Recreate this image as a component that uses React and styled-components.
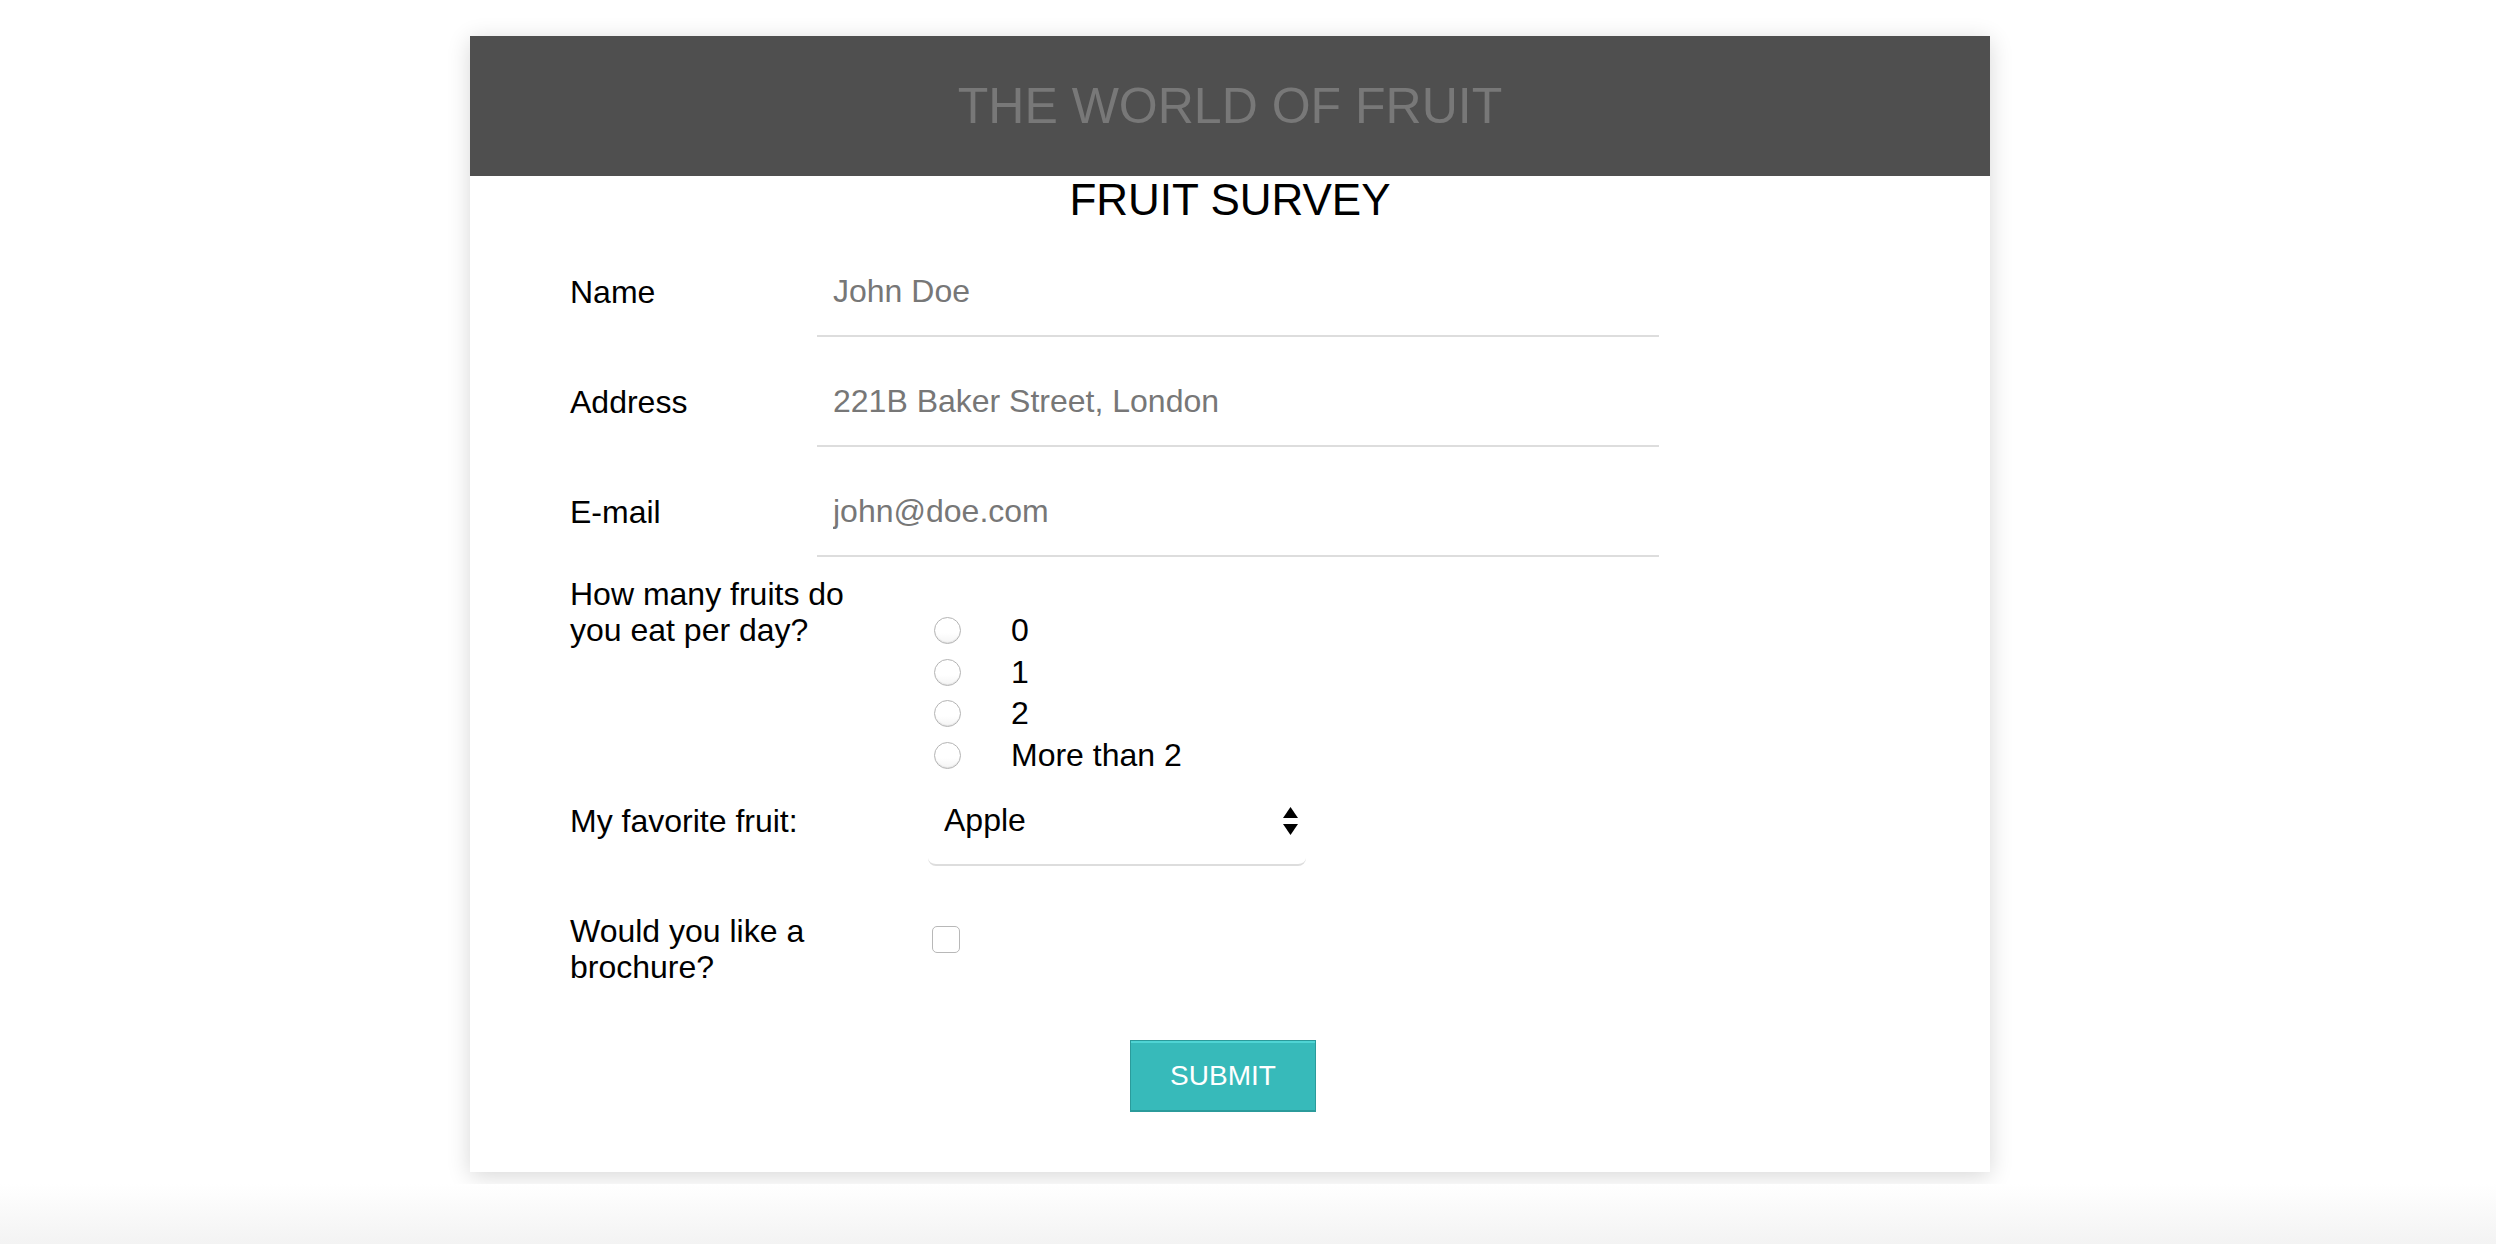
import React from 'react'
import styled, { createGlobalStyle } from 'styled-components'

const GlobalStyle = createGlobalStyle`
  html, body {
    margin: 0;
    padding: 0;
    background: #fff;
    font-family: "Liberation Sans", Arial, Helvetica, sans-serif;
    overflow: hidden;
  }
`

const Page = styled.div`
  display: flex;
  flex-direction: column;
  align-items: center;
  min-height: 100vh;
  box-sizing: border-box;
  padding-top: 36px;
`

const Card = styled.div`
  width: 1520px;
  margin-right: 36px;
  background: #fff;
  box-shadow: 0 4px 22px rgba(0, 0, 0, 0.16);
  padding-bottom: 60px;
`

const Header = styled.header`
  height: 140px;
  background: #4f4f4f;
  display: flex;
  align-items: center;
  justify-content: center;

  h1 {
    margin: 0;
    font-size: 50px;
    font-weight: 400;
    color: #787878;  /* faded grey on dark */
  }
`

const Title = styled.h2`
  margin: 2px 0 0;
  font-size: 44px;
  line-height: 43px;
  font-weight: 400;
  text-align: center;
  color: #000;
`

const Form = styled.form`
  display: flex;
  flex-direction: column;
  padding: 26px 0 0 100px;
`

const TextRow = styled.div`
  display: grid;
  grid-template-columns: 247px 842px;
  align-items: center;
  margin-bottom: 20px;
`

const Label = styled.label`
  font-size: 32px;
  line-height: 36px;
  color: #000;
`

const TextInput = styled.input`
  height: 90px;
  box-sizing: border-box;
  padding: 0 16px;
  border: none;
  border-bottom: 2px solid #ddd;
  font-family: inherit;
  font-size: 32px;
  color: #333;
  outline: none;

  &::placeholder {
    color: #777;
  }
`

const ChoiceRow = styled.div`
  display: grid;
  grid-template-columns: 320px auto;
  column-gap: 40px;
  align-items: ${(p) => p.$align || 'start'};
  margin-top: ${(p) => p.$top || 0}px;
`

const RadioGroup = styled.div`
  display: flex;
  flex-direction: column;
  margin-top: 34px;
`

const RadioItem = styled.label`
  display: flex;
  align-items: center;
  height: 41.5px;
  font-size: 32px;
  color: #000;
`

const Radio = styled.input.attrs({ type: 'radio' })`
  appearance: none;
  width: 27px;
  height: 27px;
  margin: 0 50px 0 4px;
  border: 1px solid #b4b4b4;
  border-radius: 50%;
  background: linear-gradient(#fff 60%, #f4f4f4);
  box-shadow: inset 0 -1px 1px rgba(0, 0, 0, 0.08);
`

const SelectWrap = styled.div`
  position: relative;
  width: 378px;
  margin-left: -2px;
`

const Select = styled.select`
  appearance: none;
  width: 100%;
  height: 90px;
  padding: 0 40px 0 16px;
  border: none;
  border-bottom: 2px solid #ddd;
  border-radius: 8px;
  background: #fff;
  font-family: inherit;
  font-size: 32px;
  color: #000;
  outline: none;
`

const Arrows = styled.svg`
  position: absolute;
  right: 8px;
  top: 31px;
  pointer-events: none;
`

const Checkbox = styled.input.attrs({ type: 'checkbox' })`
  appearance: none;
  width: 28px;
  height: 27px;
  margin: 13px 0 0 2px;
  border: 1px solid #b8b8b8;
  border-radius: 5px;
  background: #fff;
`

const ButtonRow = styled.div`
  display: flex;
  justify-content: center;
  margin: 55px 14px 0 -100px;
`

const SubmitButton = styled.button`
  width: 186px;
  height: 72px;
  border: 1px solid #2b9b9b;
  border-bottom-width: 2px;
  background: #37baba;
  box-shadow: inset 0 2px 0 #4fd4d4;
  color: #fff;
  font-family: inherit;
  font-size: 28px;
  cursor: pointer;
`

const Footer = styled.footer`
  margin-top: auto;
  width: 100%;
  height: 60px;
  background: linear-gradient(#fff, #f3f3f3);
`

const fields = [
  { id: 'name', label: 'Name', placeholder: 'John Doe' },
  { id: 'address', label: 'Address', placeholder: '221B Baker Street, London' },
  { id: 'email', label: 'E-mail', placeholder: 'john@doe.com' },
]

const counts = ['0', '1', '2', 'More than 2']

const App = () => {
  return (
    <>
      <GlobalStyle />
      <Page>
        <Card>
          <Header>
            <h1>THE WORLD OF FRUIT</h1>
          </Header>
          <Title>FRUIT SURVEY</Title>
          <Form onSubmit={(e) => e.preventDefault()}>
            {fields.map((f) => (
              <TextRow key={f.id}>
                <Label htmlFor={f.id}>{f.label}</Label>
                <TextInput id={f.id} placeholder={f.placeholder} />
              </TextRow>
            ))}

            <ChoiceRow $top={-1}>
              <Label>How many fruits do you eat per day?</Label>
              <RadioGroup>
                {counts.map((c) => (
                  <RadioItem key={c}>
                    <Radio name="count" value={c} />
                    {c}
                  </RadioItem>
                ))}
              </RadioGroup>
            </ChoiceRow>

            <ChoiceRow $align="center">
              <Label htmlFor="fruit">My favorite fruit:</Label>
              <SelectWrap>
                <Select id="fruit" defaultValue="apple">
                  <option value="apple">Apple</option>
                  <option value="banana">Banana</option>
                  <option value="orange">Orange</option>
                </Select>
                <Arrows width="15" height="28" viewBox="0 0 15 28">
                  <polygon points="7.5,0 15,11 0,11" fill="#000" />
                  <polygon points="0,17 15,17 7.5,28" fill="#000" />
                </Arrows>
              </SelectWrap>
            </ChoiceRow>

            <ChoiceRow $top={47}>
              <Label htmlFor="brochure">Would you like a brochure?</Label>
              <div>
                <Checkbox id="brochure" />
              </div>
            </ChoiceRow>

            <ButtonRow>
              <SubmitButton type="submit">SUBMIT</SubmitButton>
            </ButtonRow>
          </Form>
        </Card>
        <Footer />
      </Page>
    </>
  )
}

export default App
